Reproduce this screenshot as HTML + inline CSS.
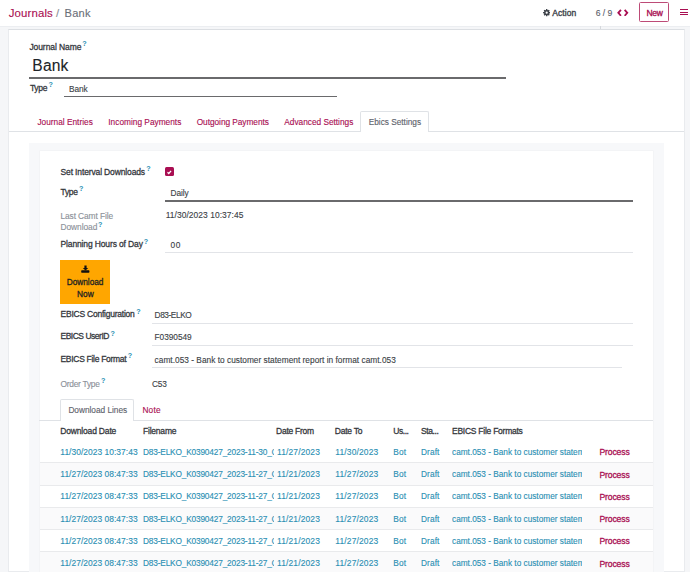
<!DOCTYPE html>
<html><head><meta charset="utf-8"><style>
html,body{margin:0;padding:0;width:690px;height:572px;overflow:hidden;background:#f5f6f8;font-family:"Liberation Sans",sans-serif}
.t{position:absolute;white-space:nowrap;line-height:1.117}
.r{position:absolute;box-sizing:border-box}
svg.r{display:block}
</style></head><body>
<div class="r" style="left:0px;top:0px;width:690px;height:26px;background:#ffffff;"></div>
<div class="r" style="left:0px;top:25.6px;width:690px;height:0.8px;background:#eceef1;"></div>
<div class="r" style="left:600px;top:26px;width:1px;height:3px;background:#d5d8dc;"></div>
<div class="r" style="left:8px;top:29px;width:677px;height:543px;background:#ffffff;border:1px solid #e9ebee;border-top:1px solid #dcdfe3;"></div>
<div class="t" style="left:8.70px;top:6.88px;font-size:11.4px;color:#a90e52;font-weight:400;-webkit-text-stroke:0.12px #a90e52;letter-spacing:0.148px;">Journals</div>
<div class="t" style="left:56.00px;top:6.88px;font-size:11.4px;color:#8a8f96;font-weight:400;-webkit-text-stroke:0.12px #8a8f96;letter-spacing:0px;">/</div>
<div class="t" style="left:64.50px;top:7.15px;font-size:11.1px;color:#6b7079;font-weight:400;-webkit-text-stroke:0.12px #6b7079;letter-spacing:0.234px;">Bank</div>
<svg class="r" style="left:542.8px;top:9.2px" width="7.4" height="7.4" viewBox="0 0 16 16"><path fill="#3d4249" fill-rule="evenodd" d="M13.78 6.40 L15.88 6.62 L15.88 9.38 L13.78 9.60 L13.22 10.96 L14.55 12.60 L12.60 14.55 L10.96 13.22 L9.60 13.78 L9.38 15.88 L6.62 15.88 L6.40 13.78 L5.04 13.22 L3.40 14.55 L1.45 12.60 L2.78 10.96 L2.22 9.60 L0.12 9.38 L0.12 6.62 L2.22 6.40 L2.78 5.04 L1.45 3.40 L3.40 1.45 L5.04 2.78 L6.40 2.22 L6.62 0.12 L9.38 0.12 L9.60 2.22 L10.96 2.78 L12.60 1.45 L14.55 3.40 L13.22 5.04ZM10.40 8.00A2.4 2.4 0 1 0 5.60 8.00A2.4 2.4 0 1 0 10.40 8.00Z"/></svg>
<div class="t" style="left:552.30px;top:8.91px;font-size:8.5px;color:#3d4249;font-weight:400;-webkit-text-stroke:0.28px #3d4249;letter-spacing:0.075px;-webkit-text-stroke-width:0.35px;">Action</div>
<div class="t" style="left:595.80px;top:9.02px;font-size:8.6px;color:#5b616b;font-weight:400;-webkit-text-stroke:0.12px #5b616b;letter-spacing:-0.059px;">6 / 9</div>
<svg class="r" style="left:617.3px;top:8.5px" width="11.6" height="7.6" viewBox="0 0 23 15"><path fill="none" stroke="#a90e52" stroke-width="3.6" d="M7.8 1.6 2.6 7.5 7.8 13.4M15.2 1.6l5.2 5.9-5.2 5.9"/></svg>
<div class="r" style="left:639.4px;top:2.2px;width:29.6px;height:19.8px;border:1px solid #bd4b77;border-radius:1.5px"></div>
<div class="t" style="left:646.60px;top:8.71px;font-size:8.5px;color:#a90e52;font-weight:400;-webkit-text-stroke:0.28px #a90e52;letter-spacing:-0.358px;-webkit-text-stroke-width:0.32px;">New</div>
<div class="r" style="left:680.3px;top:9.3px;width:7.4px;height:1.2px;background:#a90e52;"></div>
<div class="r" style="left:680.3px;top:11.5px;width:7.4px;height:1.2px;background:#a90e52;"></div>
<div class="r" style="left:680.3px;top:13.8px;width:7.4px;height:1.2px;background:#a90e52;"></div>
<div class="t" style="left:29.40px;top:42.61px;font-size:8.5px;color:#34373c;font-weight:400;-webkit-text-stroke:0.28px #34373c;letter-spacing:-0.075px;">Journal Name</div>
<div class="t" style="left:82.20px;top:40.08px;font-size:7.2px;color:#2a8fb3;font-weight:700;letter-spacing:0px;">?</div>
<div class="t" style="left:32.30px;top:57.18px;font-size:15.6px;color:#212428;font-weight:400;-webkit-text-stroke:0.12px #212428;letter-spacing:0.184px;">Bank</div>
<div class="r" style="left:29px;top:77px;width:477px;height:1.7px;background:#6a6a6c;"></div>
<div class="t" style="left:29.90px;top:84.01px;font-size:8.5px;color:#34373c;font-weight:400;-webkit-text-stroke:0.28px #34373c;letter-spacing:-0.312px;">Type</div>
<div class="t" style="left:48.50px;top:81.48px;font-size:7.2px;color:#2a8fb3;font-weight:700;letter-spacing:0px;">?</div>
<div class="t" style="left:69.00px;top:84.89px;font-size:8.3px;color:#3b3f46;font-weight:400;-webkit-text-stroke:0.12px #3b3f46;letter-spacing:-0.107px;">Bank</div>
<div class="r" style="left:64.2px;top:96.3px;width:272.6px;height:1.2px;background:#6a6a6c;"></div>
<div class="r" style="left:9px;top:130.8px;width:675px;height:1.0px;background:#dfe2e6;"></div>
<div class="t" style="left:37.40px;top:117.59px;font-size:8.3px;color:#a90e52;font-weight:400;-webkit-text-stroke:0.12px #a90e52;letter-spacing:0.004px;">Journal Entries</div>
<div class="t" style="left:108.30px;top:117.59px;font-size:8.3px;color:#a90e52;font-weight:400;-webkit-text-stroke:0.12px #a90e52;letter-spacing:0.008px;">Incoming Payments</div>
<div class="t" style="left:196.70px;top:117.59px;font-size:8.3px;color:#a90e52;font-weight:400;-webkit-text-stroke:0.12px #a90e52;letter-spacing:-0.042px;">Outgoing Payments</div>
<div class="t" style="left:284.30px;top:117.59px;font-size:8.3px;color:#a90e52;font-weight:400;-webkit-text-stroke:0.12px #a90e52;letter-spacing:-0.012px;">Advanced Settings</div>
<div class="r" style="left:360.3px;top:110.6px;width:68.3px;height:21.2px;background:#fff;border:1px solid #dfe2e6;border-bottom:none;border-radius:2px 2px 0 0"></div>
<div class="t" style="left:368.70px;top:117.79px;font-size:8.3px;color:#5d626b;font-weight:400;-webkit-text-stroke:0.12px #5d626b;letter-spacing:-0.014px;">Ebics Settings</div>
<div class="r" style="left:29.2px;top:142.5px;width:634.6px;height:429.5px;background:#f7f8fa;"></div>
<div class="r" style="left:39.5px;top:150.5px;width:613.9px;height:421.5px;background:#ffffff;box-shadow:0 0 0 0.6px #f1f2f4;"></div>
<div class="t" style="left:60.50px;top:167.71px;font-size:8.5px;color:#34373c;font-weight:400;-webkit-text-stroke:0.28px #34373c;letter-spacing:-0.134px;">Set Interval Downloads</div>
<div class="t" style="left:146.20px;top:165.48px;font-size:7.2px;color:#2a8fb3;font-weight:700;letter-spacing:0px;">?</div>
<div class="r" style="left:165.3px;top:167.4px;width:8.5px;height:8.5px;background:#a90e52;border-radius:1.5px"></div>
<svg class="r" style="left:166.2px;top:168.5px" width="6.6" height="6.4" viewBox="0 0 10 10"><path fill="none" stroke="#fff" stroke-width="2" d="M2.2 5.2 4.2 7 7.8 3"/></svg>
<div class="t" style="left:60.50px;top:187.91px;font-size:8.5px;color:#34373c;font-weight:400;-webkit-text-stroke:0.28px #34373c;letter-spacing:-0.312px;">Type</div>
<div class="t" style="left:79.00px;top:185.48px;font-size:7.2px;color:#2a8fb3;font-weight:700;letter-spacing:0px;">?</div>
<div class="t" style="left:170.50px;top:188.99px;font-size:8.3px;color:#3b3f46;font-weight:400;-webkit-text-stroke:0.12px #3b3f46;letter-spacing:-0.088px;">Daily</div>
<div class="r" style="left:165px;top:200.2px;width:468px;height:1.4px;background:#6a6a6c;"></div>
<div class="t" style="left:60.50px;top:211.60px;font-size:8.4px;color:#8b9098;font-weight:400;-webkit-text-stroke:0.12px #8b9098;letter-spacing:-0.108px;">Last Camt File</div>
<div class="t" style="left:60.50px;top:223.40px;font-size:8.4px;color:#8b9098;font-weight:400;-webkit-text-stroke:0.12px #8b9098;letter-spacing:-0.064px;">Download</div>
<div class="t" style="left:97.90px;top:221.48px;font-size:7.2px;color:#2a8fb3;font-weight:700;letter-spacing:0px;">?</div>
<div class="t" style="left:165.70px;top:211.35px;font-size:8.45px;color:#3b3f46;font-weight:400;-webkit-text-stroke:0.12px #3b3f46;letter-spacing:0.05px;">11/30/2023 10:37:45</div>
<div class="t" style="left:60.50px;top:240.21px;font-size:8.5px;color:#34373c;font-weight:400;-webkit-text-stroke:0.28px #34373c;letter-spacing:-0.132px;">Planning Hours of Day</div>
<div class="t" style="left:143.70px;top:237.98px;font-size:7.2px;color:#2a8fb3;font-weight:700;letter-spacing:0px;">?</div>
<div class="t" style="left:170.50px;top:241.39px;font-size:8.3px;color:#3b3f46;font-weight:400;-webkit-text-stroke:0.12px #3b3f46;letter-spacing:0.566px;">00</div>
<div class="r" style="left:165px;top:252.3px;width:468px;height:1.0px;background:#e2e4e8;"></div>
<div class="r" style="left:60.2px;top:260.2px;width:49.6px;height:43.6px;background:#ffa600;"></div>
<svg class="r" style="left:80.5px;top:265px" width="9" height="8" viewBox="0 0 9 8"><path fill="#111" d="M3.4 0.4h2.2v2.5h1.6L4.5 5.4 1.8 2.9h1.6z"/><rect x="0.2" y="5.3" width="8.2" height="2.4" rx="0.6" fill="#111"/></svg>
<div class="t" style="left:66.80px;top:277.69px;font-size:8.3px;color:#1d1f22;font-weight:400;-webkit-text-stroke:0.28px #1d1f22;letter-spacing:-0.044px;">Download</div>
<div class="t" style="left:76.90px;top:290.39px;font-size:8.3px;color:#1d1f22;font-weight:400;-webkit-text-stroke:0.28px #1d1f22;letter-spacing:0.095px;">Now</div>
<div class="t" style="left:60.50px;top:310.11px;font-size:8.5px;color:#34373c;font-weight:400;-webkit-text-stroke:0.28px #34373c;letter-spacing:-0.23px;">EBICS Configuration</div>
<div class="t" style="left:136.20px;top:307.68px;font-size:7.2px;color:#2a8fb3;font-weight:700;letter-spacing:0px;">?</div>
<div class="t" style="left:154.60px;top:311.49px;font-size:8.3px;color:#3b3f46;font-weight:400;-webkit-text-stroke:0.12px #3b3f46;letter-spacing:-0.432px;">D83-ELKO</div>
<div class="r" style="left:152.3px;top:322.5px;width:480.7px;height:1.0px;background:#e2e4e8;"></div>
<div class="t" style="left:60.50px;top:332.21px;font-size:8.5px;color:#34373c;font-weight:400;-webkit-text-stroke:0.28px #34373c;letter-spacing:-0.493px;">EBICS UserID</div>
<div class="t" style="left:110.50px;top:329.78px;font-size:7.2px;color:#2a8fb3;font-weight:700;letter-spacing:0px;">?</div>
<div class="t" style="left:154.60px;top:333.49px;font-size:8.3px;color:#3b3f46;font-weight:400;-webkit-text-stroke:0.12px #3b3f46;letter-spacing:-0.039px;">F0390549</div>
<div class="r" style="left:152.3px;top:344.5px;width:480.7px;height:1.0px;background:#e2e4e8;"></div>
<div class="t" style="left:60.50px;top:354.91px;font-size:8.5px;color:#34373c;font-weight:400;-webkit-text-stroke:0.28px #34373c;letter-spacing:-0.297px;">EBICS File Format</div>
<div class="t" style="left:127.70px;top:352.48px;font-size:7.2px;color:#2a8fb3;font-weight:700;letter-spacing:0px;">?</div>
<div class="t" style="left:154.60px;top:355.79px;font-size:8.3px;color:#3b3f46;font-weight:400;-webkit-text-stroke:0.12px #3b3f46;letter-spacing:0.023px;">camt.053 - Bank to customer statement report in format camt.053</div>
<div class="r" style="left:152.3px;top:367.3px;width:469.7px;height:1.0px;background:#e2e4e8;"></div>
<div class="t" style="left:60.50px;top:379.70px;font-size:8.4px;color:#8b9098;font-weight:400;-webkit-text-stroke:0.12px #8b9098;letter-spacing:-0.261px;">Order Type</div>
<div class="t" style="left:100.90px;top:377.48px;font-size:7.2px;color:#2a8fb3;font-weight:700;letter-spacing:0px;">?</div>
<div class="t" style="left:152.00px;top:379.79px;font-size:8.3px;color:#3b3f46;font-weight:400;-webkit-text-stroke:0.12px #3b3f46;letter-spacing:-0.217px;">C53</div>
<div class="r" style="left:39.3px;top:420px;width:614.0px;height:1px;background:#dfe2e6;"></div>
<div class="r" style="left:60.3px;top:399px;width:74.2px;height:22px;background:#fff;border:1px solid #dfe2e6;border-bottom:none;border-radius:2px 2px 0 0"></div>
<div class="t" style="left:68.40px;top:406.49px;font-size:8.3px;color:#5d626b;font-weight:400;-webkit-text-stroke:0.12px #5d626b;letter-spacing:-0.019px;">Download Lines</div>
<div class="t" style="left:142.40px;top:406.19px;font-size:8.3px;color:#a90e52;font-weight:400;-webkit-text-stroke:0.12px #a90e52;letter-spacing:0.223px;">Note</div>
<div class="t" style="left:60.30px;top:426.91px;font-size:8.5px;color:#34373c;font-weight:400;-webkit-text-stroke:0.28px #34373c;letter-spacing:-0.177px;">Download Date</div>
<div class="t" style="left:143.00px;top:426.91px;font-size:8.5px;color:#34373c;font-weight:400;-webkit-text-stroke:0.28px #34373c;letter-spacing:-0.21px;">Filename</div>
<div class="t" style="left:276.00px;top:426.91px;font-size:8.5px;color:#34373c;font-weight:400;-webkit-text-stroke:0.28px #34373c;letter-spacing:-0.245px;">Date From</div>
<div class="t" style="left:334.80px;top:426.91px;font-size:8.5px;color:#34373c;font-weight:400;-webkit-text-stroke:0.28px #34373c;letter-spacing:-0.223px;">Date To</div>
<div class="t" style="left:393.30px;top:426.91px;font-size:8.5px;color:#34373c;font-weight:400;-webkit-text-stroke:0.28px #34373c;letter-spacing:-0.446px;">Us...</div>
<div class="t" style="left:420.90px;top:426.91px;font-size:8.5px;color:#34373c;font-weight:400;-webkit-text-stroke:0.28px #34373c;letter-spacing:-0.369px;">Sta...</div>
<div class="t" style="left:452.00px;top:426.91px;font-size:8.5px;color:#34373c;font-weight:400;-webkit-text-stroke:0.28px #34373c;letter-spacing:-0.253px;">EBICS File Formats</div>
<div class="t" style="left:60.30px;top:447.75px;font-size:8.45px;color:#2a8fb3;font-weight:400;-webkit-text-stroke:0.12px #2a8fb3;letter-spacing:0.028px;">11/30/2023 10:37:43</div>
<div class="t" style="left:143.00px;top:447.89px;font-size:8.3px;color:#2a8fb3;font-weight:400;-webkit-text-stroke:0.12px #2a8fb3;letter-spacing:-0.173px;width:131px;overflow:hidden;">D83-ELKO_K0390427_2023-11-30_C</div>
<div class="t" style="left:277.00px;top:447.75px;font-size:8.45px;color:#2a8fb3;font-weight:400;-webkit-text-stroke:0.12px #2a8fb3;letter-spacing:0.143px;">11/27/2023</div>
<div class="t" style="left:335.30px;top:447.75px;font-size:8.45px;color:#2a8fb3;font-weight:400;-webkit-text-stroke:0.12px #2a8fb3;letter-spacing:0.143px;">11/30/2023</div>
<div class="t" style="left:393.30px;top:447.89px;font-size:8.3px;color:#2a8fb3;font-weight:400;-webkit-text-stroke:0.12px #2a8fb3;letter-spacing:0.166px;">Bot</div>
<div class="t" style="left:420.90px;top:447.89px;font-size:8.3px;color:#2a8fb3;font-weight:400;-webkit-text-stroke:0.12px #2a8fb3;letter-spacing:0.129px;">Draft</div>
<div class="t" style="left:452.00px;top:447.93px;font-size:8.25px;color:#2a8fb3;font-weight:400;-webkit-text-stroke:0.12px #2a8fb3;letter-spacing:0px;width:130px;overflow:hidden;">camt.053 - Bank to customer statement</div>
<div class="t" style="left:599.40px;top:448.42px;font-size:8.6px;color:#a90e52;font-weight:400;-webkit-text-stroke:0.28px #a90e52;letter-spacing:-0.124px;">Process</div>
<div class="r" style="left:39.5px;top:462.25px;width:613.8px;height:22.25px;background:#fafafb;"></div>
<div class="r" style="left:39.5px;top:462.25px;width:613.8px;height:1.0px;background:#e9eaec;"></div>
<div class="t" style="left:60.30px;top:470.00px;font-size:8.45px;color:#2a8fb3;font-weight:400;-webkit-text-stroke:0.12px #2a8fb3;letter-spacing:0.028px;">11/27/2023 08:47:33</div>
<div class="t" style="left:143.00px;top:470.14px;font-size:8.3px;color:#2a8fb3;font-weight:400;-webkit-text-stroke:0.12px #2a8fb3;letter-spacing:-0.173px;width:131px;overflow:hidden;">D83-ELKO_K0390427_2023-11-27_C</div>
<div class="t" style="left:277.00px;top:470.00px;font-size:8.45px;color:#2a8fb3;font-weight:400;-webkit-text-stroke:0.12px #2a8fb3;letter-spacing:0.143px;">11/21/2023</div>
<div class="t" style="left:335.30px;top:470.00px;font-size:8.45px;color:#2a8fb3;font-weight:400;-webkit-text-stroke:0.12px #2a8fb3;letter-spacing:0.143px;">11/27/2023</div>
<div class="t" style="left:393.30px;top:470.14px;font-size:8.3px;color:#2a8fb3;font-weight:400;-webkit-text-stroke:0.12px #2a8fb3;letter-spacing:0.166px;">Bot</div>
<div class="t" style="left:420.90px;top:470.14px;font-size:8.3px;color:#2a8fb3;font-weight:400;-webkit-text-stroke:0.12px #2a8fb3;letter-spacing:0.129px;">Draft</div>
<div class="t" style="left:452.00px;top:470.18px;font-size:8.25px;color:#2a8fb3;font-weight:400;-webkit-text-stroke:0.12px #2a8fb3;letter-spacing:0px;width:130px;overflow:hidden;">camt.053 - Bank to customer statement</div>
<div class="t" style="left:599.40px;top:470.67px;font-size:8.6px;color:#a90e52;font-weight:400;-webkit-text-stroke:0.28px #a90e52;letter-spacing:-0.124px;">Process</div>
<div class="r" style="left:39.5px;top:484.5px;width:613.8px;height:1.0px;background:#e9eaec;"></div>
<div class="t" style="left:60.30px;top:492.25px;font-size:8.45px;color:#2a8fb3;font-weight:400;-webkit-text-stroke:0.12px #2a8fb3;letter-spacing:0.028px;">11/27/2023 08:47:33</div>
<div class="t" style="left:143.00px;top:492.39px;font-size:8.3px;color:#2a8fb3;font-weight:400;-webkit-text-stroke:0.12px #2a8fb3;letter-spacing:-0.173px;width:131px;overflow:hidden;">D83-ELKO_K0390427_2023-11-27_C</div>
<div class="t" style="left:277.00px;top:492.25px;font-size:8.45px;color:#2a8fb3;font-weight:400;-webkit-text-stroke:0.12px #2a8fb3;letter-spacing:0.143px;">11/21/2023</div>
<div class="t" style="left:335.30px;top:492.25px;font-size:8.45px;color:#2a8fb3;font-weight:400;-webkit-text-stroke:0.12px #2a8fb3;letter-spacing:0.143px;">11/27/2023</div>
<div class="t" style="left:393.30px;top:492.39px;font-size:8.3px;color:#2a8fb3;font-weight:400;-webkit-text-stroke:0.12px #2a8fb3;letter-spacing:0.166px;">Bot</div>
<div class="t" style="left:420.90px;top:492.39px;font-size:8.3px;color:#2a8fb3;font-weight:400;-webkit-text-stroke:0.12px #2a8fb3;letter-spacing:0.129px;">Draft</div>
<div class="t" style="left:452.00px;top:492.43px;font-size:8.25px;color:#2a8fb3;font-weight:400;-webkit-text-stroke:0.12px #2a8fb3;letter-spacing:0px;width:130px;overflow:hidden;">camt.053 - Bank to customer statement</div>
<div class="t" style="left:599.40px;top:492.92px;font-size:8.6px;color:#a90e52;font-weight:400;-webkit-text-stroke:0.28px #a90e52;letter-spacing:-0.124px;">Process</div>
<div class="r" style="left:39.5px;top:506.75px;width:613.8px;height:22.25px;background:#fafafb;"></div>
<div class="r" style="left:39.5px;top:506.75px;width:613.8px;height:1.0px;background:#e9eaec;"></div>
<div class="t" style="left:60.30px;top:514.50px;font-size:8.45px;color:#2a8fb3;font-weight:400;-webkit-text-stroke:0.12px #2a8fb3;letter-spacing:0.028px;">11/27/2023 08:47:33</div>
<div class="t" style="left:143.00px;top:514.64px;font-size:8.3px;color:#2a8fb3;font-weight:400;-webkit-text-stroke:0.12px #2a8fb3;letter-spacing:-0.173px;width:131px;overflow:hidden;">D83-ELKO_K0390427_2023-11-27_C</div>
<div class="t" style="left:277.00px;top:514.50px;font-size:8.45px;color:#2a8fb3;font-weight:400;-webkit-text-stroke:0.12px #2a8fb3;letter-spacing:0.143px;">11/21/2023</div>
<div class="t" style="left:335.30px;top:514.50px;font-size:8.45px;color:#2a8fb3;font-weight:400;-webkit-text-stroke:0.12px #2a8fb3;letter-spacing:0.143px;">11/27/2023</div>
<div class="t" style="left:393.30px;top:514.64px;font-size:8.3px;color:#2a8fb3;font-weight:400;-webkit-text-stroke:0.12px #2a8fb3;letter-spacing:0.166px;">Bot</div>
<div class="t" style="left:420.90px;top:514.64px;font-size:8.3px;color:#2a8fb3;font-weight:400;-webkit-text-stroke:0.12px #2a8fb3;letter-spacing:0.129px;">Draft</div>
<div class="t" style="left:452.00px;top:514.68px;font-size:8.25px;color:#2a8fb3;font-weight:400;-webkit-text-stroke:0.12px #2a8fb3;letter-spacing:0px;width:130px;overflow:hidden;">camt.053 - Bank to customer statement</div>
<div class="t" style="left:599.40px;top:515.17px;font-size:8.6px;color:#a90e52;font-weight:400;-webkit-text-stroke:0.28px #a90e52;letter-spacing:-0.124px;">Process</div>
<div class="r" style="left:39.5px;top:529.0px;width:613.8px;height:1.0px;background:#e9eaec;"></div>
<div class="t" style="left:60.30px;top:536.75px;font-size:8.45px;color:#2a8fb3;font-weight:400;-webkit-text-stroke:0.12px #2a8fb3;letter-spacing:0.028px;">11/27/2023 08:47:33</div>
<div class="t" style="left:143.00px;top:536.89px;font-size:8.3px;color:#2a8fb3;font-weight:400;-webkit-text-stroke:0.12px #2a8fb3;letter-spacing:-0.173px;width:131px;overflow:hidden;">D83-ELKO_K0390427_2023-11-27_C</div>
<div class="t" style="left:277.00px;top:536.75px;font-size:8.45px;color:#2a8fb3;font-weight:400;-webkit-text-stroke:0.12px #2a8fb3;letter-spacing:0.143px;">11/21/2023</div>
<div class="t" style="left:335.30px;top:536.75px;font-size:8.45px;color:#2a8fb3;font-weight:400;-webkit-text-stroke:0.12px #2a8fb3;letter-spacing:0.143px;">11/27/2023</div>
<div class="t" style="left:393.30px;top:536.89px;font-size:8.3px;color:#2a8fb3;font-weight:400;-webkit-text-stroke:0.12px #2a8fb3;letter-spacing:0.166px;">Bot</div>
<div class="t" style="left:420.90px;top:536.89px;font-size:8.3px;color:#2a8fb3;font-weight:400;-webkit-text-stroke:0.12px #2a8fb3;letter-spacing:0.129px;">Draft</div>
<div class="t" style="left:452.00px;top:536.93px;font-size:8.25px;color:#2a8fb3;font-weight:400;-webkit-text-stroke:0.12px #2a8fb3;letter-spacing:0px;width:130px;overflow:hidden;">camt.053 - Bank to customer statement</div>
<div class="t" style="left:599.40px;top:537.42px;font-size:8.6px;color:#a90e52;font-weight:400;-webkit-text-stroke:0.28px #a90e52;letter-spacing:-0.124px;">Process</div>
<div class="r" style="left:39.5px;top:551.25px;width:613.8px;height:22.25px;background:#fafafb;"></div>
<div class="r" style="left:39.5px;top:551.25px;width:613.8px;height:1.0px;background:#e9eaec;"></div>
<div class="t" style="left:60.30px;top:559.00px;font-size:8.45px;color:#2a8fb3;font-weight:400;-webkit-text-stroke:0.12px #2a8fb3;letter-spacing:0.028px;">11/27/2023 08:47:33</div>
<div class="t" style="left:143.00px;top:559.14px;font-size:8.3px;color:#2a8fb3;font-weight:400;-webkit-text-stroke:0.12px #2a8fb3;letter-spacing:-0.173px;width:131px;overflow:hidden;">D83-ELKO_K0390427_2023-11-27_C</div>
<div class="t" style="left:277.00px;top:559.00px;font-size:8.45px;color:#2a8fb3;font-weight:400;-webkit-text-stroke:0.12px #2a8fb3;letter-spacing:0.143px;">11/21/2023</div>
<div class="t" style="left:335.30px;top:559.00px;font-size:8.45px;color:#2a8fb3;font-weight:400;-webkit-text-stroke:0.12px #2a8fb3;letter-spacing:0.143px;">11/27/2023</div>
<div class="t" style="left:393.30px;top:559.14px;font-size:8.3px;color:#2a8fb3;font-weight:400;-webkit-text-stroke:0.12px #2a8fb3;letter-spacing:0.166px;">Bot</div>
<div class="t" style="left:420.90px;top:559.14px;font-size:8.3px;color:#2a8fb3;font-weight:400;-webkit-text-stroke:0.12px #2a8fb3;letter-spacing:0.129px;">Draft</div>
<div class="t" style="left:452.00px;top:559.18px;font-size:8.25px;color:#2a8fb3;font-weight:400;-webkit-text-stroke:0.12px #2a8fb3;letter-spacing:0px;width:130px;overflow:hidden;">camt.053 - Bank to customer statement</div>
<div class="t" style="left:599.40px;top:559.67px;font-size:8.6px;color:#a90e52;font-weight:400;-webkit-text-stroke:0.28px #a90e52;letter-spacing:-0.124px;">Process</div>
</body></html>
